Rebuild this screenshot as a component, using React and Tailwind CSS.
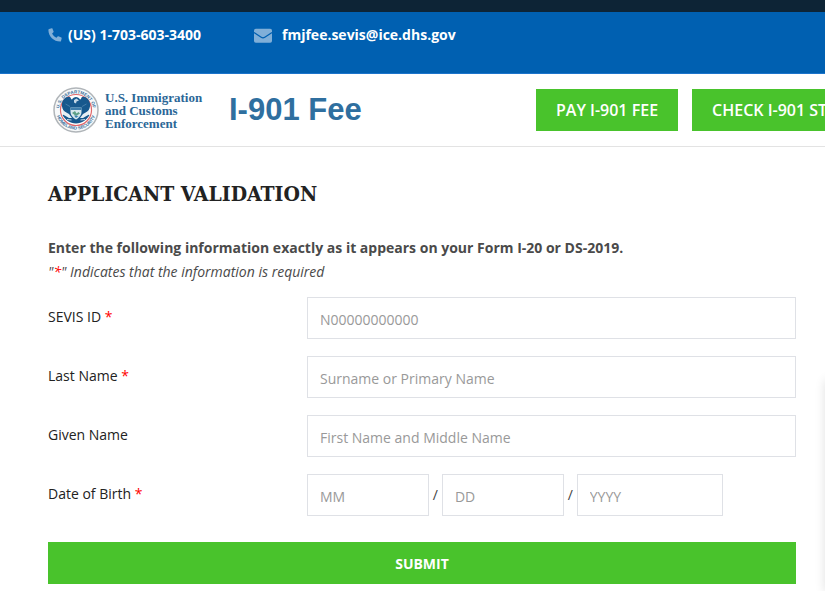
import React, { useState } from "react";

const inputStyle =
  "h-[42px] w-full min-w-0 border border-[#dfe1e6] bg-white px-3 pt-0.5 text-sm text-gray-700 placeholder:text-[#999] focus:outline-none focus:border-[#0060b1]";

function Seal() {
  return (
    <svg viewBox="0 0 92 92" className="h-[46px] w-[46px] shrink-0" aria-hidden="true">
      <defs>
        <path id="sealTop" d="M 15 61 A 34 34 0 1 1 77 61" />
        <path id="sealBottom" d="M 5 44 A 41 41 0 0 0 87 44" />
      </defs>
      <circle cx="46" cy="46" r="44" fill="#f7f9fa" stroke="#b0b5b9" strokeWidth="3" />
      <circle cx="46" cy="46" r="31" fill="#fff" stroke="#e0676a" strokeWidth="2.4" />
      <g fill="#3a709b" fontSize="9" fontWeight="bold" fontFamily="Liberation Sans, sans-serif">
        <text>
          <textPath href="#sealTop" startOffset="50%" textAnchor="middle">
            U.S. DEPARTMENT OF
          </textPath>
        </text>
        <text>
          <textPath href="#sealBottom" startOffset="50%" textAnchor="middle">
            HOMELAND SECURITY
          </textPath>
        </text>
      </g>
      {/* eagle with spread wings */}
      <path
        d="M18 33 C20 24 27 18 34 20 C36 22 36 25 38 25 C41 18 51 18 54 25 C56 25 56 22 58 20 C65 18 72 24 74 33 C75 41 72 48 66 52 L73 56 C68 66 58 72 46 73 C34 72 24 66 19 56 L26 52 C20 48 17 41 18 33 Z"
        fill="#17588d"
      />
      <path d="M42 26 L47 23 L52 27 L47 29 L46 33 L42 31 Z" fill="#c5d8e6" />
      <path d="M25 34 L34 39 M67 34 L58 39" stroke="#5a8db5" strokeWidth="1.4" />
      {/* white wing feathers above the lower field */}
      <path d="M18 46 L32 54 L38 62 L32 62 L20 55 Z M74 46 L60 54 L54 62 L60 62 L72 55 Z" fill="#e8eff4" />
      {/* shield */}
      <path d="M35 41 H57 V50 C57 57 51 62 46 65 C41 62 35 57 35 50 Z" fill="#d8e8ed" />
      <path d="M35 41 H57 V46 H35 Z" fill="#3f7eac" />
      <path d="M38 52 L44 48 L47 53 L51 50 L54 53 L46 58 Z" fill="#5ea087" />
      <path d="M42 57 L51 58 L46 62 Z" fill="#3c83b3" />
      {/* olive branch and arrows */}
      <path d="M28 65 L37 66 M64 65 L55 66" stroke="#c3d6e3" strokeWidth="2" />
    </svg>
  );
}

function PhoneIcon() {
  return (
    <svg viewBox="0 0 14 14" className="h-[14px] w-[14px]" fill="#80afd8" aria-hidden="true">
      <path d="M1.1 1.1 L3.7 0.3 C4.1 0.2 4.4 0.4 4.5 0.7 L5.6 3.5 C5.7 3.8 5.6 4.1 5.4 4.3 L4.1 5.4 C4.9 7.2 6.5 8.9 8.5 9.8 L9.6 8.4 C9.8 8.2 10.1 8.1 10.4 8.2 L13.3 9.5 C13.6 9.6 13.8 9.9 13.7 10.3 L13 12.9 C12.9 13.3 12.6 13.5 12.2 13.5 C5.8 13.5 0.4 8.3 0.4 1.9 C0.4 1.5 0.7 1.2 1.1 1.1 Z" />
    </svg>
  );
}

function MailIcon() {
  return (
    <svg viewBox="0 0 18 15" className="h-[15px] w-[18px]" aria-hidden="true">
      <rect y="0.7" width="18" height="14" rx="1.8" fill="#80afd8" />
      <path d="M0 4.4 L7.2 9.3 C8.4 10.1 9.6 10.1 10.8 9.3 L18 4.4" fill="none" stroke="#0060b1" strokeWidth="1.2" />
    </svg>
  );
}

function Label({ htmlFor, required, children }) {
  return (
    <label htmlFor={htmlFor} className="w-[259px] shrink-0 pb-0.5 text-sm text-[#222]">
      {children} {required && <span className="text-[#f00]">*</span>}
    </label>
  );
}

export default function App() {
  const [applicant, setApplicant] = useState({
    sevisId: "",
    lastName: "",
    givenName: "",
    month: "",
    day: "",
    year: "",
  });

  function handleChange(event) {
    const { name, value } = event.target;
    setApplicant((prev) => ({ ...prev, [name]: value }));
  }

  function handleSubmit(e) {
    e.preventDefault();
  }

  return (
    <div className="relative min-h-screen overflow-hidden bg-white font-['Open_Sans',sans-serif]">
      <div className="h-3 bg-[#0d2436]" />
      <div className="flex h-[62px] items-start gap-[53px] border-b border-[#1b74cb] bg-[#0060b1] px-12 pt-3 text-sm leading-[22px] font-bold text-white">
        <a href="tel:17036033400" className="flex items-center gap-[6px]">
          <PhoneIcon />
          (US) 1-703-603-3400
        </a>
        <a href="mailto:fmjfee.sevis@ice.dhs.gov" className="flex items-center gap-[10px]">
          <MailIcon />
          fmjfee.sevis@ice.dhs.gov
        </a>
      </div>

      <header className="flex h-[73px] items-center border-b border-[#e3e3e3] pl-[53px]">
        <div className="flex w-[483px] shrink-0 items-center">
          <a href="#" className="flex w-[176px] items-center gap-[6px]">
            <Seal />
            <span className="font-['Liberation_Serif',serif] text-[13px] leading-[13px] font-bold whitespace-nowrap text-[#2b6797]">
              U.S. Immigration
              <br />
              and Customs
              <br />
              Enforcement
            </span>
          </a>
          <span className="font-['Liberation_Sans',sans-serif] text-[31px] leading-9 font-bold whitespace-nowrap text-[#2f6f9f]">
            I-901 Fee
          </span>
        </div>
        <nav className="flex shrink-0 gap-[14px] text-base font-semibold text-white">
          <a href="#pay" className="flex h-[42px] items-center bg-[#49c32c] px-5">
            PAY I-901 FEE
          </a>
          <a href="#status" className="flex h-[42px] items-center bg-[#49c32c] px-5">
            CHECK I-901 STATUS
          </a>
        </nav>
      </header>

      <main className="pt-[31px] pr-[29px] pb-2 pl-12">
        <h1 className="font-['Roboto_Slab','DejaVu_Serif_Condensed','DejaVu_Serif',serif] text-[21px] leading-8 font-bold text-[#222]">
          APPLICANT VALIDATION
        </h1>
        <p className="mt-[26px] text-sm leading-6 font-bold text-[#4a4a4a]">
          Enter the following information exactly as it appears on your Form I-20 or DS-2019.
        </p>
        <p className="text-sm leading-6 text-[#4a4a4a] italic">
          "<span className="text-[#f00]">*</span>" Indicates that the information is required
        </p>

        <form onSubmit={handleSubmit} className="mt-[13px] flex flex-col gap-[17px]">
          <div className="flex items-center">
            <Label htmlFor="sevisId" required>SEVIS ID</Label>
            <input
              onChange={handleChange}
              type="text"
              value={applicant.sevisId}
              name="sevisId"
              id="sevisId"
              className={inputStyle}
              placeholder="N00000000000"
            />
          </div>

          <div className="flex items-center">
            <Label htmlFor="lastName" required>Last Name</Label>
            <input
              onChange={handleChange}
              type="text"
              value={applicant.lastName}
              name="lastName"
              id="lastName"
              className={inputStyle}
              placeholder="Surname or Primary Name"
            />
          </div>

          <div className="flex items-center">
            <Label htmlFor="givenName">Given Name</Label>
            <input
              onChange={handleChange}
              type="text"
              value={applicant.givenName}
              name="givenName"
              id="givenName"
              className={inputStyle}
              placeholder="First Name and Middle Name"
            />
          </div>

          <div className="flex items-center">
            <Label htmlFor="month" required>Date of Birth</Label>
            <div className="grid w-full grid-cols-[5fr_13px_5fr_13px_6fr] items-center pr-[73px] text-center text-sm text-[#444]">
              <input
                onChange={handleChange}
                type="text"
                value={applicant.month}
                name="month"
                id="month"
                className={inputStyle}
                placeholder="MM"
              />
              <span>/</span>
              <input
                onChange={handleChange}
                type="text"
                value={applicant.day}
                name="day"
                aria-label="Day"
                className={inputStyle}
                placeholder="DD"
              />
              <span>/</span>
              <input
                onChange={handleChange}
                type="text"
                value={applicant.year}
                name="year"
                aria-label="Year"
                className={inputStyle}
                placeholder="YYYY"
              />
            </div>
          </div>

          <button
            type="submit"
            className="mt-[9px] h-[42px] bg-[#49c32c] pt-0.5 text-sm font-bold text-white hover:bg-[#3fae25]"
          >
            SUBMIT
          </button>
        </form>
      </main>

      {/* edge of the side drawer, only its shadow shows */}
      <div className="absolute top-[380px] -right-10 bottom-0 w-10 shadow-[0_0_10px_rgba(0,0,0,0.12)]" />
    </div>
  );
}
